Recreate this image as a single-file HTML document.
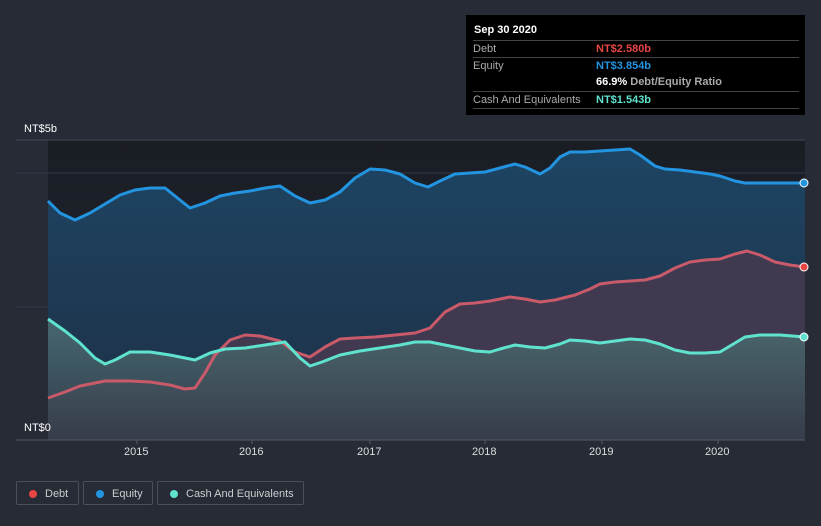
<!DOCTYPE html><html><head><meta charset="utf-8"><style>
body{margin:0;width:821px;height:526px;background:#262b36;font-family:"Liberation Sans",sans-serif;overflow:hidden;position:relative}
.tt{position:absolute;left:466px;top:15px;width:339px;height:100px;background:#000;color:#fff;font-size:11px}
.tt .h{position:absolute;left:8px;top:9px;font-weight:bold;font-size:11px}
.tt .r{position:absolute;left:7px;width:326px;border-top:1px solid #444;height:16px;line-height:17px;color:#aaa}
.tt .r b{position:absolute;left:123px}
.lg{position:absolute;top:481px;height:24px;border:1px solid #4a4f5a;border-radius:2px;color:#ccc;font-size:11px;line-height:24px;box-sizing:border-box}
.lg i{position:absolute;left:12px;top:8px;width:8px;height:8px;border-radius:50%}
.lg span{position:absolute;left:28px}
.ax{position:absolute;top:446px;color:#ddd;font-size:11px}
</style></head><body>
<svg width="821" height="526" style="position:absolute;left:0;top:0">
<defs>
<linearGradient id="bg" x1="0" y1="0" x2="0" y2="1"><stop offset="0" stop-color="#1a1d24"/><stop offset="1" stop-color="#222833"/></linearGradient>
<linearGradient id="eq" x1="0" y1="0" x2="0" y2="1"><stop offset="0" stop-color="#1d4563"/><stop offset="1" stop-color="#1f2f45"/></linearGradient>
<linearGradient id="cs" x1="0" y1="0" x2="0" y2="1"><stop offset="0" stop-color="#4d7074"/><stop offset="1" stop-color="#353d4a"/></linearGradient>
</defs>
<rect x="48" y="140" width="757" height="300" fill="url(#bg)"/>
<line x1="16" y1="140" x2="805" y2="140" stroke="#444a55"/>
<line x1="16" y1="173" x2="805" y2="173" stroke="#353a45"/>
<line x1="16" y1="307" x2="805" y2="307" stroke="#353a45"/>
<polygon fill="url(#eq)" points="48,440 48,201 60,213 75,220 90,213 105,204 120,195 135,190 150,188 165,188 175,196 190,208 205,203 220,196 235,193 250,191 265,188 280,186 295,196 310,203 325,200 340,192 355,178 370,169 385,170 400,174 415,183 428,187 440,181 455,174 470,173 485,172 500,168 515,164 525,167 540,174 550,168 560,157 570,152 585,152 600,151 615,150 630,149 640,155 655,166 665,169 680,170 695,172 710,174 720,176 735,181 745,183 760,183 780,183 805,183 805,440"/>
<polygon fill="#463a50" fill-opacity="0.85" points="48,440 48,398 65,392 80,386 105,381 130,381 150,382 170,385 185,389 195,388 205,373 215,355 230,340 245,335 260,336 280,341 295,352 310,357 325,347 340,339 355,338 375,337 395,335 415,333 430,328 445,312 460,304 475,303 490,301 510,297 525,299 540,302 555,300 575,295 590,289 600,284 615,282 630,281 645,280 660,276 675,268 690,262 705,260 720,259 735,254 747,251 760,255 775,262 790,265 805,267 805,440"/>
<polygon fill="url(#cs)" fill-opacity="0.85" points="48,440 48,319 65,331 80,343 95,358 105,364 115,360 130,352 150,352 170,355 185,358 195,360 210,353 225,349 245,348 265,345 285,342 300,358 310,366 322,362 340,355 360,351 380,348 400,345 415,342 430,342 445,345 460,348 475,351 490,352 500,349 515,345 530,347 545,348 560,344 570,340 585,341 600,343 615,341 630,339 645,340 660,344 675,350 690,353 705,353 720,352 735,343 745,337 760,335 780,335 805,337 805,440"/>
<g fill="none" stroke-width="3" stroke-linejoin="round">
<polyline stroke="#2394e0" points="48,201 60,213 75,220 90,213 105,204 120,195 135,190 150,188 165,188 175,196 190,208 205,203 220,196 235,193 250,191 265,188 280,186 295,196 310,203 325,200 340,192 355,178 370,169 385,170 400,174 415,183 428,187 440,181 455,174 470,173 485,172 500,168 515,164 525,167 540,174 550,168 560,157 570,152 585,152 600,151 615,150 630,149 640,155 655,166 665,169 680,170 695,172 710,174 720,176 735,181 745,183 760,183 780,183 805,183"/>
<polyline stroke="#c85a6a" points="48,398 65,392 80,386 105,381 130,381 150,382 170,385 185,389 195,388 205,373 215,355 230,340 245,335 260,336 280,341 295,352 310,357 325,347 340,339 355,338 375,337 395,335 415,333 430,328 445,312 460,304 475,303 490,301 510,297 525,299 540,302 555,300 575,295 590,289 600,284 615,282 630,281 645,280 660,276 675,268 690,262 705,260 720,259 735,254 747,251 760,255 775,262 790,265 805,267"/>
<polyline stroke="#5fe3cf" points="48,319 65,331 80,343 95,358 105,364 115,360 130,352 150,352 170,355 185,358 195,360 210,353 225,349 245,348 265,345 285,342 300,358 310,366 322,362 340,355 360,351 380,348 400,345 415,342 430,342 445,345 460,348 475,351 490,352 500,349 515,345 530,347 545,348 560,344 570,340 585,341 600,343 615,341 630,339 645,340 660,344 675,350 690,353 705,353 720,352 735,343 745,337 760,335 780,335 805,337"/>
</g>
<circle cx="804" cy="183" r="4" fill="#2394e0" stroke="#fff"/>
<circle cx="804" cy="267" r="4" fill="#e84545" stroke="#fff"/>
<circle cx="804" cy="337" r="4" fill="#5fe3cf" stroke="#fff"/>
<line x1="16" y1="440" x2="805" y2="440" stroke="#555b66"/>
<g stroke="#555b66"><line x1="137" y1="440" x2="137" y2="444"/><line x1="252" y1="440" x2="252" y2="444"/><line x1="370" y1="440" x2="370" y2="444"/><line x1="485" y1="440" x2="485" y2="444"/><line x1="602" y1="440" x2="602" y2="444"/><line x1="718" y1="440" x2="718" y2="444"/></g>
</svg>
<div style="position:absolute;left:24px;top:123px;color:#fff;font-size:11px">NT$5b</div>
<div style="position:absolute;left:24px;top:422px;color:#fff;font-size:11px">NT$0</div>
<div class="ax" style="left:124px">2015</div><div class="ax" style="left:239px">2016</div><div class="ax" style="left:357px">2017</div><div class="ax" style="left:472px">2018</div><div class="ax" style="left:589px">2019</div><div class="ax" style="left:705px">2020</div>
<div class="tt"><div class="h">Sep 30 2020</div>
<div class="r" style="top:25px">Debt<b style="color:#e84545">NT$2.580b</b></div>
<div class="r" style="top:42px">Equity<b style="color:#2394e0">NT$3.854b</b></div>
<div class="r" style="top:59px;border-top:none"><b style="color:#fff">66.9% <span style="color:#aaa">Debt/Equity Ratio</span></b></div>
<div class="r" style="top:76px">Cash And Equivalents<b style="color:#5fe3cf">NT$1.543b</b></div>
<div style="position:absolute;left:7px;top:93px;width:326px;border-top:1px solid #444"></div>
</div>
<div class="lg" style="left:16px;width:63px"><i style="background:#e84545"></i><span>Debt</span></div>
<div class="lg" style="left:83px;width:70px"><i style="background:#2394e0"></i><span>Equity</span></div>
<div class="lg" style="left:157px;width:147px"><i style="background:#5fe3cf"></i><span>Cash And Equivalents</span></div>
</body></html>
